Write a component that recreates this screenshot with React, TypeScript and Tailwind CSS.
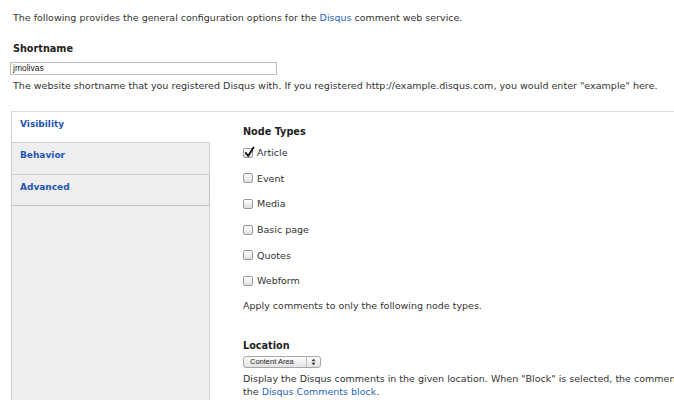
export default function App() {
  const types: { label: string; checked?: boolean }[] = [
    { label: "Article", checked: true },
    { label: "Event" },
    { label: "Media" },
    { label: "Basic page" },
    { label: "Quotes" },
    { label: "Webform" },
  ];
  return (
    <div className="w-[674px] h-[400px] overflow-hidden bg-white text-[#333] font-['DejaVu_Sans',sans-serif]">
      <p className="pt-[11px] pl-[13px] text-[9.5px] leading-[13px] whitespace-nowrap">
        The following provides the general configuration options for the{" "}
        <a className="text-[#2a66b8]">Disqus</a> comment web service.
      </p>
      <div className="mt-[18px] pl-[13px] text-[9.7px] leading-[13px] font-bold text-[#222]">Shortname</div>
      <div className="mt-[7px] ml-[10px] w-[267px] h-[13px] border border-[#bdbdbd] flex items-center pl-[2px] text-[8.5px] font-['Liberation_Sans',sans-serif] text-[#222]">
        jmolivas
      </div>
      <p className="mt-[4px] pl-[13px] text-[9.55px] leading-[13px] whitespace-nowrap">
        The website shortname that you registered Disqus with. If you registered http://example.disqus.com, you would enter "example" here.
      </p>
      <div className="mt-[19px] ml-[11px] flex border-t border-[#dcdcdc] min-h-[320px]">
        <div className="w-[199px] shrink-0 flex flex-col border-l border-[#cfcfcf] text-[9px] font-bold leading-[13px]">
          <div className="h-[31px] bg-white border-b border-[#cfcfcf] pt-[6px] pl-[8px] text-[#1f55b3]">Visibility</div>
          <div className="h-[32px] bg-[#eeeeee] border-b border-r border-[#cfcfcf] pt-[6px] pl-[8px] text-[#1f55b3]">Behavior</div>
          <div className="h-[31px] bg-[#eeeeee] border-b border-r border-[#c4c4c4] pt-[6px] pl-[8px] text-[#1f55b3]">Advanced</div>
          <div className="flex-1 bg-[#eeeeee] border-r border-[#d4d4d4]" />
        </div>
        <div className="flex-1 min-w-0 pl-[33px] pt-[13px] text-[9.5px] leading-[13px]">
          <div className="text-[9.7px] font-bold text-[#222]">Node Types</div>
          <div className="mt-[2px] flex flex-col">
            {types.map((t) => (
              <div key={t.label} className="h-[25.6px] flex items-center">
                <span className="relative w-[10px] h-[10px] rounded-[2px] border border-[#9a9a9a] bg-gradient-to-b from-white to-[#dedede]">
                  {t.checked && (
                    <svg className="absolute left-[0px] top-[-3px]" width="11" height="12" viewBox="0 0 11 12">
                      <path d="M1.8 7 L4.2 10 L9.5 1.5" fill="none" stroke="#111" strokeWidth="1.8" strokeLinecap="round" strokeLinejoin="round" />
                    </svg>
                  )}
                </span>
                <span className="ml-[4px]">{t.label}</span>
              </div>
            ))}
          </div>
          <p className="mt-[5px] whitespace-nowrap">Apply comments to only the following node types.</p>
          <div className="mt-[27px] text-[9.7px] font-bold text-[#222]">Location</div>
          <div className="mt-[4px] w-[78px] h-[12px] rounded-[3px] border border-[#a8a8a8] bg-gradient-to-b from-white to-[#e2e2e2] flex items-center font-['Liberation_Sans',sans-serif] text-[7.5px] text-[#222]">
            <span className="flex-1 pl-[6px] leading-[10px]">Content Area</span>
            <span className="w-[14px] h-full border-l border-[#b8b8b8] flex items-center justify-center">
              <svg width="5" height="8" viewBox="0 0 5 8">
                <path d="M0.5 3.2 L2.5 0.8 L4.5 3.2 Z M0.5 4.8 L2.5 7.2 L4.5 4.8 Z" fill="#333" />
              </svg>
            </span>
          </div>
          <p className="mt-[4px] whitespace-nowrap">
            Display the Disqus comments in the given location. When "Block" is selected, the comments will appear in
            <br />
            the <a className="text-[#2a66b8]">Disqus Comments block</a>.
          </p>
        </div>
      </div>
    </div>
  );
}
